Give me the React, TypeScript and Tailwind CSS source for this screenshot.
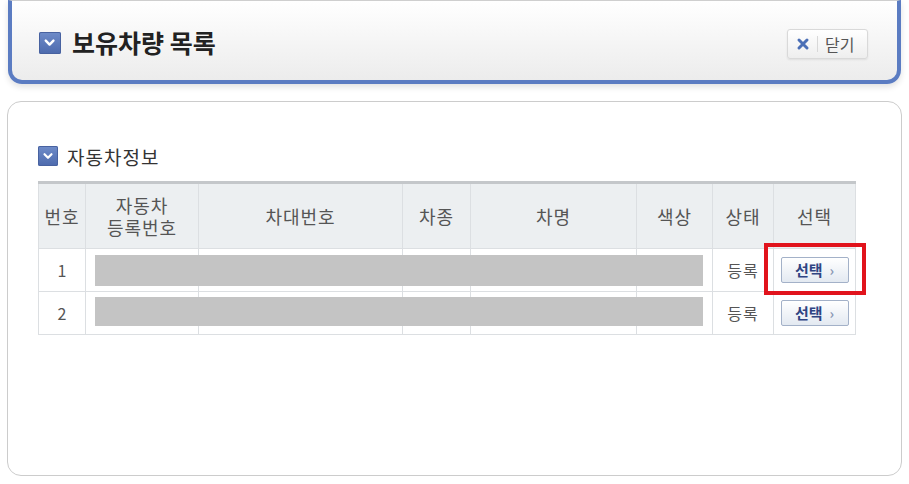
import React from 'react';

const FONT = '"Noto Sans CJK KR", "Noto Sans", sans-serif';

const ChevronBox = ({ size }: { size: number }) => (
  <span
    className="inline-flex items-center justify-center rounded-[2px] bg-gradient-to-b from-[#6f8cc9] to-[#4d6aad] shadow-[inset_0_0_0_1px_#4862a0]"
    style={{ width: size, height: size }}
  >
    <svg width={size * 0.6} height={size * 0.6} viewBox="0 0 12 12">
      <path d="M2.5 4.2 L6 7.8 L9.5 4.2" fill="none" stroke="#fff" strokeWidth="2.2" strokeLinecap="round" strokeLinejoin="round" />
    </svg>
  </span>
);

const SelectButton = () => (
  <button className="mx-auto flex h-[26px] w-[68px] items-center justify-center gap-[7px] rounded-[2px] border border-[#a3b1c8] bg-gradient-to-b from-[#ffffff] to-[#e3e9f1] text-[15px] font-bold text-[#2f4483] shadow-[inset_0_1px_0_#fff]">
    <span>선택</span>
    <span className="text-[14px] font-bold leading-none text-[#8a97b3]">›</span>
  </button>
);

const cols = [47, 113, 204, 68, 166, 76, 61, 82];

const rows = [
  { no: '1', status: '등록', barTop: 6, barH: 31 },
  { no: '2', status: '등록', barTop: 5, barH: 29 },
];

export default function App() {
  return (
    <div className="relative h-[484px] w-[909px] overflow-hidden bg-white" style={{ fontFamily: FONT }}>
      {/* 상단 타이틀 패널 */}
      <div className="mx-[8px] h-[84px] rounded-b-[14px] border-x-4 border-b-4 border-t border-x-[#5b7cc2] border-b-[#5b7cc2] border-t-[#cfcfcf] bg-gradient-to-b from-[#ffffff] to-[#ececec] shadow-[0_3px_6px_rgba(0,0,0,0.12)]">
        <div className="flex h-full items-center justify-between pl-[27px] pr-[29px] pt-[4px]">
          <div className="flex items-center gap-[11px]">
            <ChevronBox size={22} />
            <h1 className="text-[25px] font-bold leading-none text-[#222]">보유차량 목록</h1>
          </div>
          <button className="mt-[2px] flex h-[30px] w-[81px] items-center rounded-[3px] border border-[#d9d9d9] bg-gradient-to-b from-[#ffffff] to-[#eeeeee] pl-[8px] shadow-[0_1px_2px_rgba(0,0,0,0.08)]">
            <svg width="14" height="14" viewBox="0 0 14 14">
              <path d="M3 3 L11 11 M11 3 L3 11" stroke="#4b6fb6" strokeWidth="3" strokeLinecap="round" />
            </svg>
            <span className="mx-[7px] h-[16px] w-px bg-[#d8d8d8]" />
            <span className="text-[16px] leading-none text-[#555]">닫기</span>
          </button>
        </div>
      </div>

      {/* 자동차정보 패널 */}
      <div className="mx-[7px] mt-[17px] h-[375px] rounded-[14px] border border-[#cccccc] bg-white pl-[30px] pt-[44px]">
        <div className="flex items-center gap-[9px]">
          <ChevronBox size={20} />
          <span className="text-[19px] leading-none tracking-[1px] text-[#333]">자동차정보</span>
        </div>

        <div className="relative mt-[15px] w-[817px]">
          <table className="w-[817px] table-fixed border-collapse border-t-[3px] border-t-[#c4c7ca] text-[18px] text-[#555]">
            <colgroup>
              {cols.map((w, i) => (
                <col key={i} style={{ width: w }} />
              ))}
            </colgroup>
            <thead>
              <tr className="h-[66px] bg-[#eceff1]">
                {['번호', '자동차\n등록번호', '차대번호', '차종', '차명', '색상', '상태', '선택'].map((h) => (
                  <th key={h} className="whitespace-pre-line border border-t-0 border-[#dcdfe2] px-0 text-center font-normal leading-[22px] tracking-[1px]">
                    {h}
                  </th>
                ))}
              </tr>
            </thead>
            <tbody>
              {rows.map((r) => (
                <tr key={r.no} className="h-[43px]">
                  <td className="border border-[#dcdfe2] text-center text-[16px] text-[#555]">{r.no}</td>
                  <td className="relative border border-[#dcdfe2]">
                    <div className="absolute left-[9px] z-10 w-[608px] bg-[#c4c4c4]" style={{ top: r.barTop, height: r.barH }} />
                  </td>
                  <td className="border border-[#dcdfe2]" />
                  <td className="border border-[#dcdfe2]" />
                  <td className="border border-[#dcdfe2]" />
                  <td className="border border-[#dcdfe2]" />
                  <td className="border border-[#dcdfe2] text-center text-[16px] tracking-[1px] text-[#555]">{r.status}</td>
                  <td className="border border-[#dcdfe2]">
                    <SelectButton />
                  </td>
                </tr>
              ))}
            </tbody>
          </table>
          {/* 강조 표시 */}
          <div className="pointer-events-none absolute left-[726px] top-[62px] h-[52px] w-[102px] border-4 border-[#e1131c]" />
        </div>
      </div>
    </div>
  );
}
